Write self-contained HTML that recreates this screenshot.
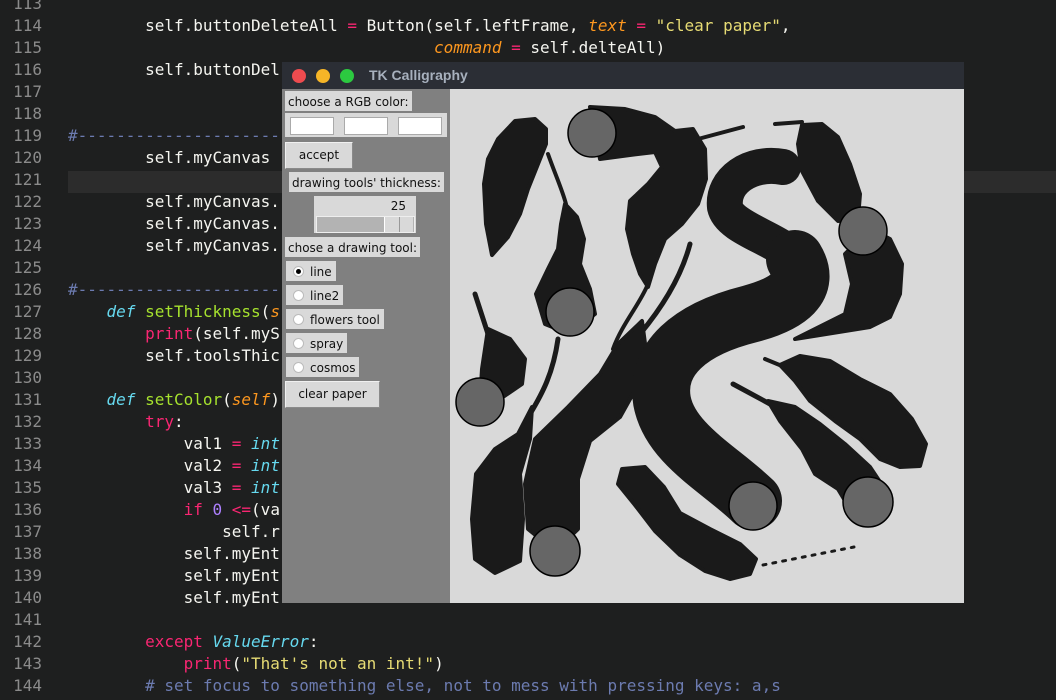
<!DOCTYPE html>
<html><head><meta charset="utf-8"><style>
body{margin:0;width:1056px;height:700px;background:#1e1f1f;overflow:hidden;position:relative;font-family:"DejaVu Sans Mono","Liberation Mono",monospace;font-size:16px}
.ln{position:absolute;left:0;width:42px;text-align:right;color:#8b8b8b;height:22px;line-height:22px}
.cd{position:absolute;left:68px;white-space:pre;color:#f5f5f0;height:22px;line-height:22px}
.p{color:#f92672}.s{color:#e6db74}.o{color:#fd971f;font-style:italic}.c{color:#66d9ef;font-style:italic}.g{color:#a6e22e}.m{color:#6c7bb0}.n{color:#ae81ff}.d{color:#3c3c3c}
.hl{position:absolute;left:68px;top:171px;width:988px;height:22px;background:#2c2c2c}
#win{position:absolute;left:282px;top:62px;width:682px;height:541px;font-family:"DejaVu Sans","Liberation Sans",sans-serif}
#tb{height:27px;background:#2b2e35;position:relative}
.dot{position:absolute;top:7px;width:14px;height:14px;border-radius:50%}
#tt{position:absolute;left:87px;top:5px;color:#a7b0bd;font-weight:bold;font-size:14px;font-family:"Liberation Sans",sans-serif}
#lp{position:absolute;left:0;top:27px;width:168px;height:514px;background:#808080;font-size:12px;color:#111;white-space:nowrap}
#cv{position:absolute;left:168px;top:27px;width:514px;height:514px;background:#d9d9d9}
.lb{position:absolute;background:#d9d9d9;height:20px;line-height:22px;padding:0 3px}
.bt{position:absolute;background:#d9d9d9;border:1px solid #f0f0f0;border-right-color:#8a8a8a;border-bottom-color:#8a8a8a;text-align:center}
.en{position:absolute;background:#fff;width:42px;height:16px;border:1px solid #aaa;top:54px}
.rb{position:absolute;left:4px;height:20px;line-height:22px;background:#d9d9d9;padding:0 4px 0 24px}
.rb:before{content:"";position:absolute;left:7px;top:5px;width:9px;height:9px;border-radius:50%;background:#fff;border:1px solid #bbb}
.rb.on:after{content:"";position:absolute;left:10px;top:8px;width:5px;height:5px;border-radius:50%;background:#000}
</style></head><body>
<div class="hl"></div>
<div class="ln" style="top:-7px">113</div>
<div class="ln" style="top:15px">114</div><div class="cd" style="top:15px">        self.buttonDeleteAll <span class="p">=</span> Button(self.leftFrame, <span class="o">text</span> <span class="p">=</span> <span class="s">"clear paper"</span>,</div>
<div class="ln" style="top:37px">115</div><div class="cd" style="top:37px">                                      <span class="o">command</span> <span class="p">=</span> self.delteAll)</div>
<div class="ln" style="top:59px">116</div><div class="cd" style="top:59px">        self.buttonDel</div>
<div class="ln" style="top:81px">117</div>
<div class="ln" style="top:103px">118</div>
<div class="ln" style="top:125px">119</div><div class="cd m" style="top:125px">#----------------------------------------</div>
<div class="ln" style="top:147px">120</div><div class="cd" style="top:147px">        self.myCanvas</div>
<div class="ln" style="top:169px">121</div>
<div class="ln" style="top:191px">122</div><div class="cd" style="top:191px">        self.myCanvas.</div>
<div class="ln" style="top:213px">123</div><div class="cd" style="top:213px">        self.myCanvas.</div>
<div class="ln" style="top:235px">124</div><div class="cd" style="top:235px">        self.myCanvas.</div>
<div class="ln" style="top:257px">125</div>
<div class="ln" style="top:279px">126</div><div class="cd m" style="top:279px">#----------------------------------------</div>
<div class="ln" style="top:301px">127</div><div class="cd" style="top:301px">    <span class="c">def</span> <span class="g">setThickness</span>(<span class="o">s</span></div>
<div class="ln" style="top:323px">128</div><div class="cd" style="top:323px">        <span class="p">print</span>(self.myS</div>
<div class="ln" style="top:345px">129</div><div class="cd" style="top:345px">        self.toolsThic</div>
<div class="ln" style="top:367px">130</div>
<div class="ln" style="top:389px">131</div><div class="cd" style="top:389px">    <span class="c">def</span> <span class="g">setColor</span>(<span class="o">self</span>)</div>
<div class="ln" style="top:411px">132</div><div class="cd" style="top:411px">        <span class="p">try</span>:</div>
<div class="ln" style="top:433px">133</div><div class="cd" style="top:433px">            val1 <span class="p">=</span> <span class="c">int</span></div>
<div class="ln" style="top:455px">134</div><div class="cd" style="top:455px">            val2 <span class="p">=</span> <span class="c">int</span></div>
<div class="ln" style="top:477px">135</div><div class="cd" style="top:477px">            val3 <span class="p">=</span> <span class="c">int</span></div>
<div class="ln" style="top:499px">136</div><div class="cd" style="top:499px">            <span class="p">if</span> <span class="n">0</span> <span class="p">&lt;=</span>(va</div>
<div class="ln" style="top:521px">137</div><div class="cd" style="top:521px">                self.r</div>
<div class="ln" style="top:543px">138</div><div class="cd" style="top:543px">            self.myEnt</div>
<div class="ln" style="top:565px">139</div><div class="cd" style="top:565px">            self.myEnt</div>
<div class="ln" style="top:587px">140</div><div class="cd" style="top:587px">            self.myEnt</div>
<div class="ln" style="top:609px">141</div>
<div class="ln" style="top:631px">142</div><div class="cd" style="top:631px">        <span class="p">except</span> <span class="c">ValueError</span>:</div>
<div class="ln" style="top:653px">143</div><div class="cd" style="top:653px">            <span class="p">print</span>(<span class="s">"That's not an int!"</span>)</div>
<div class="ln" style="top:675px">144</div><div class="cd" style="top:675px">        <span class="m"># set focus to something else, not to mess with pressing keys: a,s</span></div>

<div id="win">
<div id="tb"><div class="dot" style="left:10px;background:#ee4b4f"></div><div class="dot" style="left:34px;background:#f6b527"></div><div class="dot" style="left:58px;background:#2cc940"></div><div id="tt">TK Calligraphy</div></div>
<div id="lp">
<div class="lb" style="left:3px;top:2px">choose a RGB color:</div>
<div style="position:absolute;left:3px;top:24px;width:162px;height:24px;background:#d9d9d9"></div>
<div class="en" style="left:8px;top:28px"></div><div class="en" style="left:62px;top:28px"></div><div class="en" style="left:116px;top:28px"></div>
<div class="bt" style="left:3px;top:53px;width:66px;height:25px;line-height:25px">accept</div>
<div class="lb" style="left:7px;top:83px">drawing tools' thickness:</div>
<div style="position:absolute;left:32px;top:107px;width:102px;height:37px;background:#d9d9d9"><div style="position:absolute;right:10px;top:3px">25</div><div style="position:absolute;left:2px;top:20px;width:97px;height:15px;background:#b3b3b3;border:1px solid #eee"><div style="position:absolute;right:1px;top:0;width:28px;height:15px;background:#d9d9d9;border-left:1px solid #fff"><div style="position:absolute;left:14px;top:0;width:1px;height:15px;background:#999"></div></div></div></div>
<div class="lb" style="left:3px;top:148px">chose a drawing tool:</div>
<div class="rb on" style="top:172px">line</div>
<div class="rb" style="top:196px">line2</div>
<div class="rb" style="top:220px">flowers tool</div>
<div class="rb" style="top:244px">spray</div>
<div class="rb" style="top:268px">cosmos</div>
<div class="bt" style="left:3px;top:292px;width:93px;height:25px;line-height:25px">clear paper</div>
</div>
<div id="cv"><svg width="514" height="514" viewBox="0 0 514 514" fill="#1a1a1a" stroke="#1a1a1a" stroke-linecap="round" stroke-linejoin="round">
<polygon stroke-width="4" points="42,166 36,135 34,95 38,70 48,50 65,32 85,30 96,40 96,55 88,75 78,100 70,125 58,148"/>
<path d="M98,65 C105,85 112,100 116,115" fill="none" stroke-width="4"/>
<polygon stroke-width="4" points="115,115 127,128 134,150 130,175 140,200 145,225 120,245 95,235 86,205 98,180 108,160 111,135"/>
<polygon stroke-width="4" points="140,18 175,20 205,28 225,42 243,40 255,60 256,90 248,115 232,135 215,150 205,175 198,198 190,185 183,165 177,140 180,112 198,95 212,78 205,63 180,66 150,70"/>
<path d="M198,195 C190,215 172,235 163,260" fill="none" stroke-width="4"/>
<path d="M248,50 L293,38" fill="none" stroke-width="4"/>
<path d="M240,155 C232,185 215,215 190,245" fill="none" stroke-width="5"/>
<polygon stroke-width="4" points="192,232 196,262 190,292 170,328 140,352 128,390 128,440 105,462 78,440 75,395 85,350 118,318 150,285 168,255"/>
<path d="M25,205 L38,245" fill="none" stroke-width="5"/>
<polygon stroke-width="4" points="38,240 60,250 75,270 72,295 50,310 30,313 32,280"/>
<path d="M108,250 C103,285 92,305 80,325" fill="none" stroke-width="5"/>
<polygon stroke-width="4" points="82,318 68,345 45,360 26,385 22,430 25,470 45,484 70,472 73,430 70,385 80,350"/>
<path d="M333,78 C300,72 272,92 275,118 C280,140 330,150 345,170" fill="none" stroke-width="36"/>
<path d="M345,170 C362,198 338,215 300,225 C240,240 205,270 212,312 C220,355 270,380 303,412" fill="none" stroke-width="58"/>
<path d="M325,35 L352,33" fill="none" stroke-width="4"/>
<polygon stroke-width="4" points="352,36 372,35 388,48 400,75 410,105 408,130 388,132 368,112 352,82 348,55"/>
<polygon stroke-width="4" points="420,140 440,150 452,175 450,205 440,228 420,238 345,250 395,225 402,195 395,165"/>
<path d="M315,270 L332,277" fill="none" stroke-width="4"/>
<polygon stroke-width="4" points="330,276 350,267 380,272 410,290 440,305 462,330 476,355 470,377 450,378 430,370 410,350 385,332 360,312 345,292"/>
<path d="M283,295 L320,315" fill="none" stroke-width="5"/>
<polygon stroke-width="4" points="318,312 345,318 370,335 395,355 420,378 436,402 418,425 400,420 388,400 365,385 352,360 330,332"/>
<polygon stroke-width="4" points="172,380 195,378 214,398 230,424 260,440 290,455 306,470 300,485 280,490 255,482 230,466 205,442 185,416 168,395"/>
<path d="M313,476 L404,458" fill="none" stroke-width="3" stroke-dasharray="3,7"/>
<g fill="#666" stroke="#000" stroke-width="1.5">
<circle cx="142" cy="44" r="24"/><circle cx="413" cy="142" r="24"/><circle cx="120" cy="223" r="24"/><circle cx="30" cy="313" r="24"/><circle cx="303" cy="417" r="24"/><circle cx="105" cy="462" r="25"/><circle cx="418" cy="413" r="25"/>
</g></svg></div>
</div>
</body></html>
